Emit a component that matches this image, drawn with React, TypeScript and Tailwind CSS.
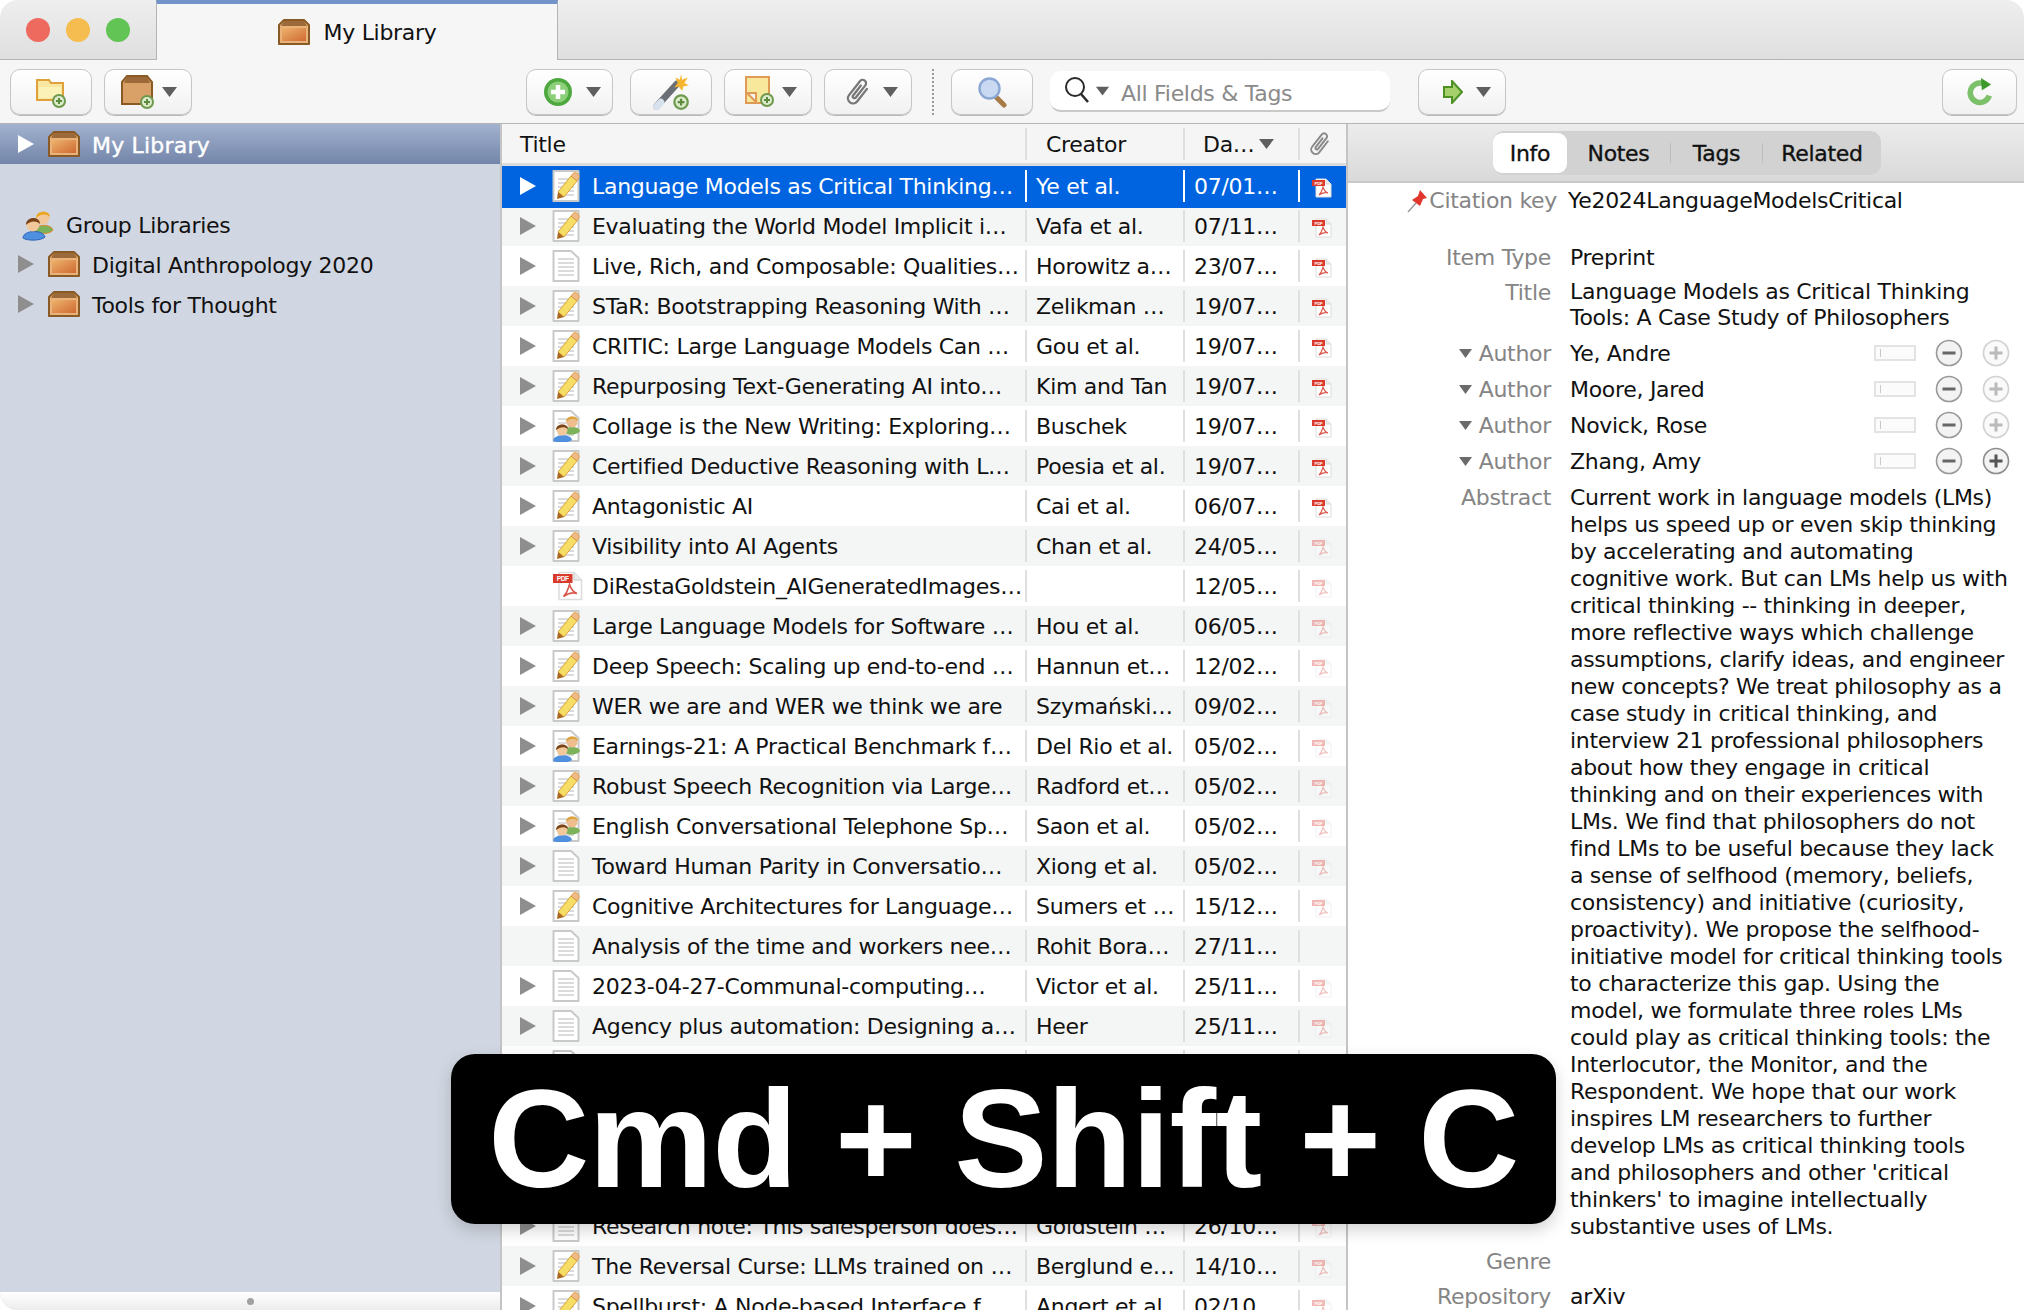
import React from 'react';

type ItemKind = 'note' | 'doc' | 'people' | 'pdf';

interface Item {
  title: string;
  creator: string;
  date: string;
  kind: ItemKind;
  arrow?: boolean;
  attach?: boolean;
}

const items: Item[] = [
  { title: 'Language Models as Critical Thinking…', creator: 'Ye et al.', date: '07/01…', kind: 'note' },
  { title: 'Evaluating the World Model Implicit i…', creator: 'Vafa et al.', date: '07/11…', kind: 'note' },
  { title: 'Live, Rich, and Composable: Qualities…', creator: 'Horowitz a…', date: '23/07…', kind: 'doc' },
  { title: 'STaR: Bootstrapping Reasoning With …', creator: 'Zelikman …', date: '19/07…', kind: 'note' },
  { title: 'CRITIC: Large Language Models Can …', creator: 'Gou et al.', date: '19/07…', kind: 'note' },
  { title: 'Repurposing Text-Generating AI into…', creator: 'Kim and Tan', date: '19/07…', kind: 'note' },
  { title: 'Collage is the New Writing: Exploring…', creator: 'Buschek', date: '19/07…', kind: 'people' },
  { title: 'Certified Deductive Reasoning with L…', creator: 'Poesia et al.', date: '19/07…', kind: 'note' },
  { title: 'Antagonistic AI', creator: 'Cai et al.', date: '06/07…', kind: 'note' },
  { title: 'Visibility into AI Agents', creator: 'Chan et al.', date: '24/05…', kind: 'note' },
  { title: 'DiRestaGoldstein_AIGeneratedImages…', creator: '', date: '12/05…', kind: 'pdf', arrow: false },
  { title: 'Large Language Models for Software …', creator: 'Hou et al.', date: '06/05…', kind: 'note' },
  { title: 'Deep Speech: Scaling up end-to-end …', creator: 'Hannun et…', date: '12/02…', kind: 'note' },
  { title: 'WER we are and WER we think we are', creator: 'Szymański…', date: '09/02…', kind: 'note' },
  { title: 'Earnings-21: A Practical Benchmark f…', creator: 'Del Rio et al.', date: '05/02…', kind: 'people' },
  { title: 'Robust Speech Recognition via Large…', creator: 'Radford et…', date: '05/02…', kind: 'note' },
  { title: 'English Conversational Telephone Sp…', creator: 'Saon et al.', date: '05/02…', kind: 'people' },
  { title: 'Toward Human Parity in Conversatio…', creator: 'Xiong et al.', date: '05/02…', kind: 'doc' },
  { title: 'Cognitive Architectures for Language…', creator: 'Sumers et …', date: '15/12…', kind: 'note' },
  { title: 'Analysis of the time and workers nee…', creator: 'Rohit Bora…', date: '27/11…', kind: 'doc', arrow: false, attach: false },
  { title: '2023-04-27-Communal-computing…', creator: 'Victor et al.', date: '25/11…', kind: 'doc' },
  { title: 'Agency plus automation: Designing a…', creator: 'Heer', date: '25/11…', kind: 'doc' },
  { title: '', creator: '', date: '', kind: 'doc' },
  { title: '', creator: '', date: '', kind: 'doc' },
  { title: '', creator: '', date: '', kind: 'doc' },
  { title: '', creator: '', date: '', kind: 'doc' },
  { title: 'Research note: This salesperson does…', creator: 'Goldstein …', date: '26/10…', kind: 'doc' },
  { title: 'The Reversal Curse: LLMs trained on …', creator: 'Berglund e…', date: '14/10…', kind: 'note' },
  { title: 'Spellburst: A Node-based Interface f…', creator: 'Angert et al.', date: '02/10…', kind: 'note' },
];

const abstractLines = [
  'Current work in language models (LMs)',
  'helps us speed up or even skip thinking',
  'by accelerating and automating',
  'cognitive work. But can LMs help us with',
  'critical thinking -- thinking in deeper,',
  'more reflective ways which challenge',
  'assumptions, clarify ideas, and engineer',
  'new concepts? We treat philosophy as a',
  'case study in critical thinking, and',
  'interview 21 professional philosophers',
  'about how they engage in critical',
  'thinking and on their experiences with',
  'LMs. We find that philosophers do not',
  'find LMs to be useful because they lack',
  'a sense of selfhood (memory, beliefs,',
  'consistency) and initiative (curiosity,',
  'proactivity). We propose the selfhood-',
  'initiative model for critical thinking tools',
  'to characterize this gap. Using the',
  'model, we formulate three roles LMs',
  'could play as critical thinking tools: the',
  'Interlocutor, the Monitor, and the',
  'Respondent. We hope that our work',
  'inspires LM researchers to further',
  'develop LMs as critical thinking tools',
  "and philosophers and other 'critical",
  "thinkers' to imagine intellectually",
  'substantive uses of LMs.',
];

const authors = ['Ye, Andre', 'Moore, Jared', 'Novick, Rose', 'Zhang, Amy'];

// --- icons ---

const Arrow = ({ white }: { white?: boolean }) => (
  <svg width="16" height="18" viewBox="0 0 16 18" className="shrink-0">
    <path d="M0 0 L16 9 L0 18 Z" fill={white ? '#ffffff' : '#8e8e8e'} />
  </svg>
);

const Caret = () => (
  <svg width="15" height="10" viewBox="0 0 15 10" className="shrink-0">
    <path d="M0 0 H15 L7.5 10 Z" fill="#5f5f5f" />
  </svg>
);

const Box = () => (
  <svg width="32" height="26" viewBox="0 0 32 26" className="shrink-0">
    <defs>
      <linearGradient id="boxFront" x1="0" y1="0" x2="1" y2="1">
        <stop offset="0" stopColor="#eeb36b" />
        <stop offset="1" stopColor="#cf6a34" />
      </linearGradient>
    </defs>
    <path d="M1 6 L6 1 H26 L31 6 V25 H1 Z" fill="#e9b27a" stroke="#8a5a26" strokeWidth="2" strokeLinejoin="round" />
    <path d="M6 2 H26 L29 7 H3 Z" fill="#9c6a38" />
    <rect x="4" y="9" width="24" height="13" fill="url(#boxFront)" />
  </svg>
);

const AddBadge = ({ cx, cy, r = 7 }: { cx: number; cy: number; r?: number }) => (
  <g>
    <circle cx={cx} cy={cy} r={r} fill="#6f9a4e" />
    <circle cx={cx} cy={cy} r={r - 2} fill="#dcebcb" />
    <path d={`M${cx - 3} ${cy} H${cx + 3} M${cx} ${cy - 3} V${cy + 3}`} stroke="#5d8a3c" strokeWidth="2" />
  </g>
);

const People = ({ size = 34 }: { size?: number }) => (
  <svg width={size} height={size} viewBox="0 0 34 34" className="shrink-0">
    <path d="M13 24 C13 17 30 16 32 23 C30 27 18 28 13 24 Z" fill="#7cb35a" stroke="#e08a30" strokeWidth="1" />
    <circle cx="22" cy="11" r="6.5" fill="#f2c79a" />
    <path d="M15 11 C15 3 29 3 29 10 C25 6 19 7 15 11 Z" fill="#e9a620" />
    <path d="M2 31 C2 23 22 22 24 30 C20 34 6 34 2 31 Z" fill="#4f8fe0" stroke="#2d62b4" strokeWidth="1" />
    <circle cx="12" cy="18" r="6.5" fill="#f2c79a" />
    <path d="M5 18 C5 9 19 9 19 17 C15 13 9 14 5 18 Z" fill="#7a4418" />
  </svg>
);

const NoteIcon = ({ kind }: { kind: ItemKind }) => {
  if (kind === 'pdf') return <PdfIcon large />;
  const docPath = kind === 'note' ? 'M1.5 1 H26.5 V31 H1.5 Z' : 'M1.5 1 H19 L26.5 8 V31 H1.5 Z';
  return (
    <svg width="28" height="32" viewBox="0 0 28 32" className="shrink-0">
      <path d={docPath} fill="#ffffff" stroke="#c9c9c9" strokeWidth="2" strokeLinejoin="round" />
      <path d="M6 9 H22 M6 13 H22 M6 17 H22 M6 21 H22 M6 25 H22" stroke="#cfcfcf" strokeWidth="1.6" />
      {kind === 'note' && (
        <g>
          <path d="M6 22 L19 6 L25 11 L12 27 Z" fill="#f6dd66" stroke="#dca23c" strokeWidth="1" />
          <path d="M19 6 L21.5 3 C24 1 28 5 27 7.5 L25 11 Z" fill="#f0b98a" stroke="#dca23c" strokeWidth="1" />
          <path d="M6 22 L5 29 L12 27 Z" fill="#a9661f" />
        </g>
      )}
      {kind === 'people' && (
        <g>
          <path d="M12 22 C12 16 27 15 28 21 C26 25 16 26 12 22 Z" fill="#7cb35a" />
          <circle cx="20" cy="12" r="5.5" fill="#eebd8d" />
          <path d="M14 12 C14 5 26 5 26 11 C22 8 18 8 14 12 Z" fill="#d9a23a" />
          <path d="M1 31 C1 24 19 23 20 30 C17 33 4 33 1 31 Z" fill="#4f8fe0" />
          <circle cx="10" cy="20" r="5.5" fill="#f2c79a" />
          <path d="M4 20 C4 13 16 13 16 19 C12 16 8 17 4 20 Z" fill="#7a4418" />
        </g>
      )}
    </svg>
  );
};

function PdfIcon({ faded, large }: { faded?: boolean; large?: boolean }) {
  const w = large ? 32 : 20;
  const h = large ? 30 : 20;
  return (
    <svg width={w} height={h} viewBox="0 0 20 20" className={faded ? 'shrink-0 opacity-35' : 'shrink-0'}>
      <path d="M4 1 H14 L19 6 V19 H4 Z" fill="#ffffff" stroke="#dcdcdc" strokeWidth="1" />
      <path d="M14 1 V6 H19" fill="#ececec" stroke="#d8d8d8" strokeWidth="1" />
      <rect x="0" y="2" width="13" height="6" fill="#d93a2b" />
      <text x="6.5" y="6.8" fontSize="4.4" fontWeight="700" fontFamily="Liberation Sans, sans-serif" textAnchor="middle" fill="#ffffff">PDF</text>
      <path d="M11 9 C10 12 10 14 7 17 C10 15 13 14 16 15 C13 14 12 12 11 9 Z" fill="none" stroke="#d9554a" strokeWidth="1.1" />
    </svg>
  );
}

const Clip = ({ size = 32, color = '#777777' }: { size?: number; color?: string }) => (
  <svg width={size} height={size} viewBox="0 0 28 28" className="shrink-0">
    <g transform="rotate(38 14 14)">
      <path
        d="M18.5 7 V21 A4.5 4.5 0 0 1 9.5 21 V5.5 A3 3 0 0 1 15.5 5.5 V19 A1.5 1.5 0 0 1 12.5 19 V8"
        fill="none"
        stroke={color}
        strokeWidth="2"
        strokeLinecap="round"
      />
    </g>
  </svg>
);

const Magnifier = () => (
  <svg width="30" height="32" viewBox="0 0 30 32">
    <path d="M19 21 L27 29" stroke="#a87a46" strokeWidth="5" strokeLinecap="round" />
    <circle cx="12.5" cy="12.5" r="10" fill="#c9d9f2" stroke="#8ba8d4" strokeWidth="2.4" />
  </svg>
);

const ToolButton = ({ width, caret, children }: { width: string; caret?: boolean; children: React.ReactNode }) => (
  <div className={`flex h-[46px] ${width} shrink-0 items-center justify-center gap-[13px] rounded-[10px] border border-[#c6c6c6] bg-linear-to-b from-[#ffffff] to-[#f1f1f1] shadow-[0_1px_0_#b9b9b9]`}>
    {children}
    {caret && <Caret />}
  </div>
);

const Separator = ({ selected }: { selected: boolean }) => (
  <div className={selected ? 'h-8 w-0.5 shrink-0 bg-[#ffffff]' : 'h-8 w-0.5 shrink-0 bg-[#dfdfdf]'} />
);

const CreatorControls = ({ plusActive }: { plusActive: boolean }) => (
  <div className="ml-auto flex items-center gap-[19px] pr-[14px]">
    <div className="flex h-4 w-[42px] items-center border-2 border-[#e3e3e3] bg-[#fbfbfb] pl-1">
      <div className="h-2 w-px bg-[#c9c9c9]" />
    </div>
    <svg width="28" height="28" viewBox="0 0 28 28">
      <circle cx="14" cy="14" r="12.5" fill="#f3f3f3" stroke="#9a9a9a" strokeWidth="1.6" />
      <path d="M7.5 14 H20.5" stroke="#666666" strokeWidth="3" />
    </svg>
    <svg width="28" height="28" viewBox="0 0 28 28" className={plusActive ? '' : 'opacity-40'}>
      <circle cx="14" cy="14" r="12.5" fill="#f3f3f3" stroke="#8d8d8d" strokeWidth="1.6" />
      <path d="M7.5 14 H20.5 M14 7.5 V20.5" stroke="#555555" strokeWidth="3" />
    </svg>
  </div>
);

const ItemRow = ({ item, index }: { item: Item; index: number }) => {
  const selected = index === 0;
  const rowClass = selected
    ? 'relative z-10 flex h-10 shrink-0 items-center bg-[#0064e0] text-[#ffffff] shadow-[0_2px_0_#0064e0]'
    : index % 2 === 1
      ? 'flex h-10 shrink-0 items-center bg-[#f4f5f5]'
      : 'flex h-10 shrink-0 items-center bg-[#ffffff]';
  return (
    <div className={rowClass}>
      <div className="flex h-8 w-[523px] shrink-0 items-center overflow-hidden whitespace-nowrap">
        <div className="ml-[18px] w-8 shrink-0">{item.arrow !== false && <Arrow white={selected} />}</div>
        <div className="flex w-10 shrink-0 justify-start">
          <NoteIcon kind={item.kind} />
        </div>
        <span>{item.title}</span>
      </div>
      <Separator selected={selected} />
      <div className="w-[156px] shrink-0 overflow-hidden whitespace-nowrap pl-[9px]">{item.creator}</div>
      <Separator selected={selected} />
      <div className="w-[113px] shrink-0 overflow-hidden whitespace-nowrap pl-[9px]">{item.date}</div>
      <Separator selected={selected} />
      <div className="flex w-[46px] shrink-0 justify-start pl-3 pt-1">
        {item.attach !== false && <PdfIcon faded={index > 8} />}
      </div>
    </div>
  );
};

const Label = ({ children }: { children?: React.ReactNode }) => (
  <div className="flex w-[203px] shrink-0 items-center justify-end gap-[7px] text-[#858585]">{children}</div>
);

export default function App() {
  return (
    <div className="relative h-[1310px] w-[2024px] overflow-hidden bg-white font-['DejaVu_Sans',sans-serif] text-[22px] leading-[27px] tracking-[-0.3px] text-[#111111]">
      <div className="flex h-full flex-col overflow-hidden rounded-[18px]">
        {/* Tab bar */}
        <div className="flex h-[60px] shrink-0 bg-linear-to-b from-[#eeeeee] to-[#dfdfdf]">
          <div className="flex w-[156px] shrink-0 items-center gap-4 border-b border-[#b4b4b4] pl-[26px]">
            <div className="h-6 w-6 rounded-full bg-[#ee6a5f]" />
            <div className="h-6 w-6 rounded-full bg-[#f5bd4f]" />
            <div className="h-6 w-6 rounded-full bg-[#61c454]" />
          </div>
          <div className="flex w-[402px] shrink-0 items-center justify-center gap-[14px] border-x border-t-4 border-x-[#b4b4b4] border-t-[#7393cb] bg-[#f6f6f6]">
            <Box />
            <span>My Library</span>
          </div>
          <div className="flex-1 border-b border-[#b4b4b4]" />
        </div>

        {/* Toolbar */}
        <div className="flex h-[64px] shrink-0 items-center border-b border-[#b4b4b4] bg-[#f6f6f6] pl-[10px] pr-[7px]">
          <ToolButton width="w-[82px]">
            <svg width="32" height="32" viewBox="0 0 32 32">
              <path d="M2 4 H14 L16 7 H28 V24 H2 Z" fill="#f7e7a0" stroke="#e0a03a" strokeWidth="2" />
              <path d="M4 11 H26 V22 H4 Z" fill="#fbf2b8" />
              <AddBadge cx={24} cy={25} />
            </svg>
          </ToolButton>
          <div className="ml-3">
            <ToolButton width="w-[88px]" caret>
              <svg width="36" height="36" viewBox="0 0 36 36" className="mr-[-7px]">
                <path d="M2 8 L7 2 H27 L32 8 V30 H2 Z" fill="#d9a067" stroke="#8a5a26" strokeWidth="2" />
                <path d="M7 3 H27 L30 9 H4 Z" fill="#9c6a38" />
                <AddBadge cx={27} cy={28} />
              </svg>
            </ToolButton>
          </div>
          <div className="ml-[334px]">
            <ToolButton width="w-[87px]" caret>
              <svg width="30" height="30" viewBox="0 0 30 30" className="ml-1">
                <circle cx="15" cy="15" r="14" fill="#4da83f" />
                <circle cx="15" cy="15" r="10.5" fill="#8ccf79" />
                <path d="M8 15 H22 M15 8 V22" stroke="#ffffff" strokeWidth="4.5" />
              </svg>
            </ToolButton>
          </div>
          <div className="ml-[17px]">
            <ToolButton width="w-[82px]">
              <svg width="38" height="38" viewBox="0 0 34 34">
                <path d="M4 30 L22 10" stroke="#6b7076" strokeWidth="6" strokeLinecap="round" />
                <path d="M4 30 L8 26" stroke="#d7e2ee" strokeWidth="6" strokeLinecap="round" />
                <path d="M26 1 L27 6 L32 4 L29 9 L33 11 L28 12 L27 16 L24 12 L20 13 L23 9 L21 4 L25 6 Z" fill="#f5b52e" />
                <AddBadge cx={26} cy={26} />
              </svg>
            </ToolButton>
          </div>
          <div className="ml-3">
            <ToolButton width="w-[88px]" caret>
              <svg width="30" height="32" viewBox="0 0 30 32" className="translate-x-1.5 overflow-visible">
                <rect x="1" y="1" width="23" height="26" fill="#f8e89c" stroke="#df9a55" strokeWidth="2" />
                <path d="M2 17 H11 V26 Z" fill="#f3f3f3" stroke="#df9a55" strokeWidth="2" />
                <AddBadge cx={22} cy={24} />
              </svg>
            </ToolButton>
          </div>
          <div className="ml-3">
            <ToolButton width="w-[88px]" caret>
              <div className="translate-x-1">
                <Clip />
              </div>
            </ToolButton>
          </div>
          <div className="ml-5 h-[46px] border-l-2 border-dotted border-[#9a9a9a]" />
          <div className="ml-[17px]">
            <ToolButton width="w-[82px]">
              <Magnifier />
            </ToolButton>
          </div>
          <div className="ml-[17px] flex h-[41px] w-[340px] shrink-0 items-center rounded-[11px] border-b-2 border-[#c9c9c9] bg-[#ffffff] pl-[14px]">
            <svg width="26" height="30" viewBox="0 0 26 30" className="shrink-0">
              <circle cx="11" cy="11" r="9" fill="none" stroke="#2a2a2a" strokeWidth="2" />
              <path d="M17 18 L24 26" stroke="#2a2a2a" strokeWidth="2.6" />
            </svg>
            <div className="ml-[5px] scale-[0.9]">
              <Caret />
            </div>
            <span className="ml-[11px] pt-[5px] text-[#8a8a8a]">All Fields &amp; Tags</span>
          </div>
          <div className="ml-7">
            <ToolButton width="w-[88px] pl-[10px]" caret>
              <svg width="20" height="24" viewBox="0 0 20 24">
                <path d="M1 7 H9 V1 L19 12 L9 23 V17 H1 Z" fill="#a5d06b" stroke="#4d9124" strokeWidth="2" />
              </svg>
            </ToolButton>
          </div>
          <div className="ml-auto">
            <ToolButton width="w-[75px]">
              <svg width="26" height="28" viewBox="0 0 28 30">
                <path d="M22 9 A10.5 10.5 0 1 0 24 19" fill="none" stroke="#7cc06a" strokeWidth="6" />
                <path d="M15 0 L26 7 L16 13 Z" fill="#3f9a2c" />
              </svg>
            </ToolButton>
          </div>
        </div>

        {/* Three panes */}
        <div className="flex min-h-0 flex-1">
          {/* Sidebar */}
          <div className="flex w-[500px] shrink-0 flex-col bg-[#d1d7e2]">
            <div className="flex h-10 shrink-0 items-center bg-linear-to-b from-[#a2b2cf] to-[#7385a9] pl-[18px] text-[#ffffff] [-webkit-text-stroke:0.4px_#ffffff]">
              <Arrow white />
              <div className="ml-[14px]">
                <Box />
              </div>
              <span className="ml-3 pt-0.5 tracking-[0.2px]">My Library</span>
            </div>
            <div className="flex flex-1 flex-col pt-10">
              <div className="flex h-10 items-center pl-[21px]">
                <People />
                <span className="ml-[11px] pt-0.5">Group Libraries</span>
              </div>
              {['Digital Anthropology 2020', 'Tools for Thought'].map(name => (
                <div key={name} className="flex h-10 items-center pl-[18px]">
                  <Arrow />
                  <div className="ml-[14px]">
                    <Box />
                  </div>
                  <span className="ml-3 pt-0.5">{name}</span>
                </div>
              ))}
            </div>
            <div className="flex h-[18px] shrink-0 items-center justify-center bg-linear-to-b from-[#ffffff] to-[#ececec]">
              <div className="h-[7px] w-[7px] rounded-full bg-[#a0a0a0]" />
            </div>
          </div>

          {/* Item list */}
          <div className="flex w-[848px] shrink-0 flex-col overflow-hidden border-x-2 border-x-[#c4c4c4] bg-[#ffffff]">
            <div className="flex h-[42px] shrink-0 items-center border-b-[3px] border-[#dcdcdc] bg-[#f5f5f5]">
              <div className="w-[523px] shrink-0 pl-[18px] pt-0.5">Title</div>
              <div className="h-8 w-0.5 shrink-0 bg-[#dfdfdf]" />
              <div className="w-[156px] shrink-0 pl-[19px] pt-0.5">Creator</div>
              <div className="h-8 w-0.5 shrink-0 bg-[#dfdfdf]" />
              <div className="flex w-[113px] shrink-0 items-center gap-1 pl-[18px]">
                <span className="pt-0.5">Da…</span>
                <Caret />
              </div>
              <div className="h-8 w-0.5 shrink-0 bg-[#dfdfdf]" />
              <div className="pl-1.5">
                <Clip size={28} color="#8a8a8a" />
              </div>
            </div>
            {items.map((item, i) => (
              <ItemRow key={i} item={item} index={i} />
            ))}
          </div>

          {/* Details */}
          <div className="flex min-w-0 flex-1 flex-col bg-[#ffffff]">
            <div className="flex h-[59px] shrink-0 justify-start border-b-2 border-[#c9c9c9] bg-linear-to-b from-[#ececec] to-[#d9d9d9] pl-[145px] pt-[7px]">
              <div className="flex h-[44px] w-[388px] items-center rounded-[11px] bg-[#d2d2d2] [-webkit-text-stroke:0.35px_#111111]">
                <div className="flex h-10 w-[74px] items-center justify-center rounded-[9px] bg-[#ffffff]">Info</div>
                <div className="flex w-[103px] justify-center">Notes</div>
                <div className="h-5 w-px bg-[#bdbdbd]" />
                <div className="flex w-[91px] justify-center">Tags</div>
                <div className="h-5 w-px bg-[#bdbdbd]" />
                <div className="flex flex-1 justify-center">Related</div>
              </div>
            </div>
            <div className="flex flex-1 flex-col pt-1">
              <div className="flex h-[27px] items-center">
                <div className="flex w-[209px] shrink-0 items-center justify-end text-[#858585]">
                  <svg width="22" height="24" viewBox="0 0 22 24" className="shrink-0">
                    <path d="M1 23 L9 14" stroke="#9a9a9a" strokeWidth="1.5" />
                    <path d="M13 1 L20 9 L16 10 L13 17 L5 11 L11 7 Z" fill="#e2362c" />
                  </svg>
                  <span>Citation key</span>
                </div>
                <span className="ml-[11px]">Ye2024LanguageModelsCritical</span>
              </div>
              <div className="mt-[30px] flex h-[27px] items-center">
                <Label>Item Type</Label>
                <span className="ml-[19px]">Preprint</span>
              </div>
              <div className="mt-[8px] flex">
                <Label>
                  <span className="self-start">Title</span>
                </Label>
                <div className="ml-[19px] leading-[26px]">
                  <div>Language Models as Critical Thinking</div>
                  <div>Tools: A Case Study of Philosophers</div>
                </div>
              </div>
              <div className="mt-[4px] flex flex-col">
                {authors.map((name, i) => (
                  <div key={name} className="flex h-9 items-center">
                    <Label>
                      <svg width="13" height="9" viewBox="0 0 13 9" className="shrink-0">
                        <path d="M0 0 H13 L6.5 9 Z" fill="#6b6b6b" />
                      </svg>
                      <span>Author</span>
                    </Label>
                    <span className="ml-[19px]">{name}</span>
                    <CreatorControls plusActive={i === authors.length - 1} />
                  </div>
                ))}
              </div>
              <div className="mt-[5px] flex">
                <Label>
                  <span className="self-start">Abstract</span>
                </Label>
                <div className="ml-[19px] whitespace-nowrap">
                  {abstractLines.map(line => (
                    <div key={line}>{line}</div>
                  ))}
                </div>
              </div>
              <div className="mt-[8px] flex h-[27px] items-center">
                <Label>Genre</Label>
              </div>
              <div className="mt-2 flex h-[27px] items-center">
                <Label>Repository</Label>
                <span className="ml-[19px]">arXiv</span>
              </div>
            </div>
          </div>
        </div>
      </div>

      {/* Shortcut overlay */}
      <div className="absolute left-[451px] top-[1054px] flex h-[170px] w-[1105px] items-center justify-center rounded-[24px] bg-[#000000] font-['Liberation_Sans',sans-serif] text-[140px] font-bold leading-none tracking-[-0.8px] text-[#ffffff] shadow-[0_6px_16px_rgba(0,0,0,0.18)]">
        Cmd + Shift + C
      </div>
    </div>
  );
}
